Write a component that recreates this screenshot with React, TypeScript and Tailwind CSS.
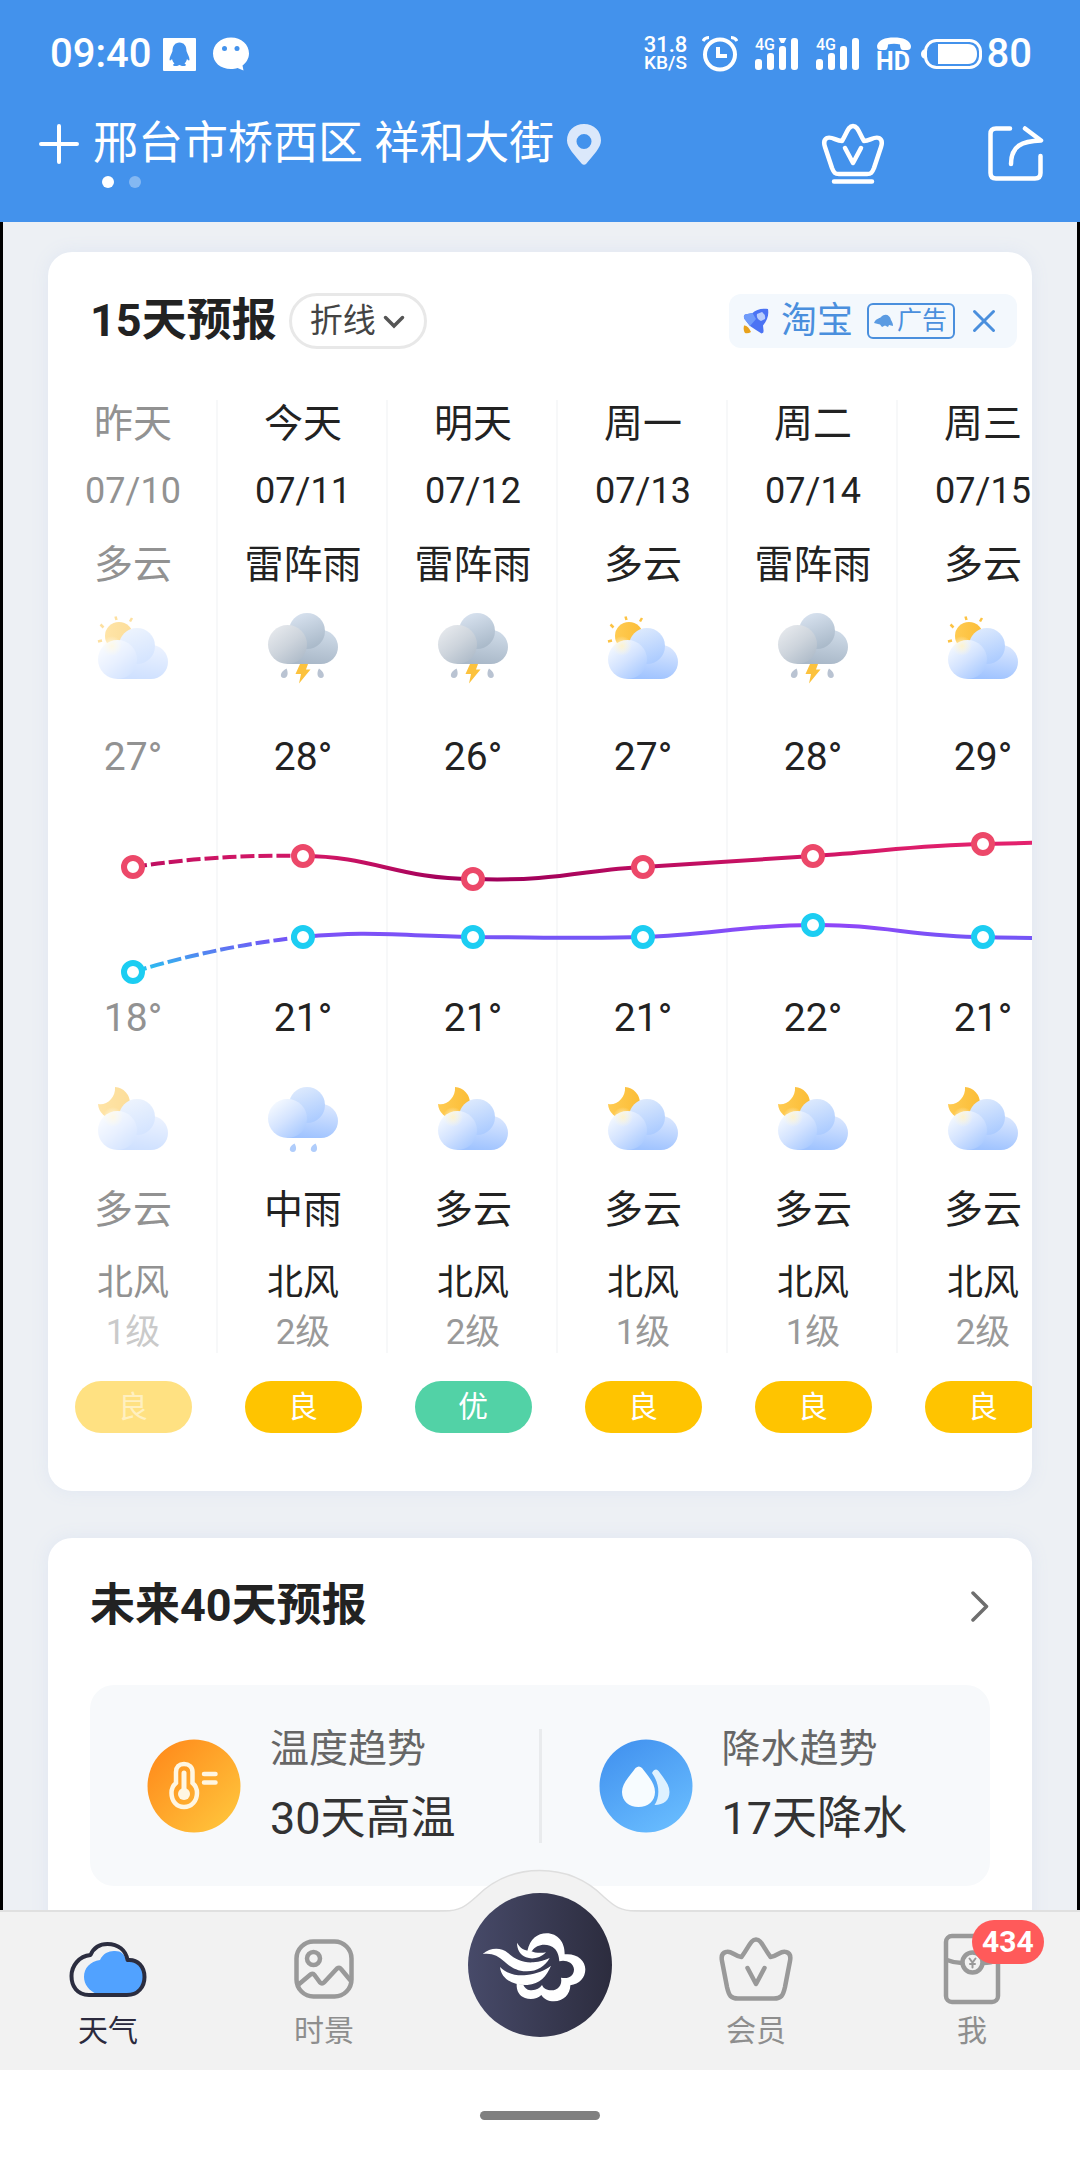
import type { ReactNode } from 'react';

type Sky = 'cloudDay' | 'cloudNight' | 'thunder' | 'rain';

type Day = {
  name: string;
  date: string;
  dayText: string;
  dayIcon: Sky;
  high: number;
  low: number;
  nightIcon: Sky;
  nightText: string;
  wind: string;
  level: string;
  air: string;
  past?: boolean;
};

const days: Day[] = [
  { name: '昨天', date: '07/10', dayText: '多云', dayIcon: 'cloudDay', high: 27, low: 18, nightIcon: 'cloudNight', nightText: '多云', wind: '北风', level: '1级', air: '良', past: true },
  { name: '今天', date: '07/11', dayText: '雷阵雨', dayIcon: 'thunder', high: 28, low: 21, nightIcon: 'rain', nightText: '中雨', wind: '北风', level: '2级', air: '良' },
  { name: '明天', date: '07/12', dayText: '雷阵雨', dayIcon: 'thunder', high: 26, low: 21, nightIcon: 'cloudNight', nightText: '多云', wind: '北风', level: '2级', air: '优' },
  { name: '周一', date: '07/13', dayText: '多云', dayIcon: 'cloudDay', high: 27, low: 21, nightIcon: 'cloudNight', nightText: '多云', wind: '北风', level: '1级', air: '良' },
  { name: '周二', date: '07/14', dayText: '雷阵雨', dayIcon: 'thunder', high: 28, low: 22, nightIcon: 'cloudNight', nightText: '多云', wind: '北风', level: '1级', air: '良' },
  { name: '周三', date: '07/15', dayText: '多云', dayIcon: 'cloudDay', high: 29, low: 21, nightIcon: 'cloudNight', nightText: '多云', wind: '北风', level: '2级', air: '良' },
];

// Shared gradients for the weather icons
function IconDefs() {
  return (
    <svg className="absolute" width="0" height="0" aria-hidden="true">
      <defs>
        <linearGradient id="blueLeft" x1="0.1" y1="0.1" x2="0.8" y2="1">
          <stop offset="0" stopColor="#f6faff" />
          <stop offset="0.5" stopColor="#d3e3ff" />
          <stop offset="1" stopColor="#a6c8ff" />
        </linearGradient>
        <linearGradient id="blueTop" x1="0.2" y1="0" x2="0.6" y2="1">
          <stop offset="0" stopColor="#dfebfd" />
          <stop offset="1" stopColor="#abcbff" />
        </linearGradient>
        <linearGradient id="blueRight" x1="0.6" y1="0" x2="0.4" y2="1">
          <stop offset="0" stopColor="#dae7ff" />
          <stop offset="1" stopColor="#9fc3ff" />
        </linearGradient>
        <linearGradient id="grayLeft" x1="0.1" y1="0.1" x2="0.8" y2="1">
          <stop offset="0" stopColor="#e6e9ed" />
          <stop offset="0.5" stopColor="#cdd4dc" />
          <stop offset="1" stopColor="#adbac8" />
        </linearGradient>
        <linearGradient id="grayTop" x1="0.2" y1="0" x2="0.6" y2="1">
          <stop offset="0" stopColor="#d9e3f0" />
          <stop offset="1" stopColor="#a9b9c9" />
        </linearGradient>
        <linearGradient id="grayRight" x1="0.6" y1="0" x2="0.4" y2="1">
          <stop offset="0" stopColor="#cfdbe8" />
          <stop offset="1" stopColor="#a9b8c8" />
        </linearGradient>
        <linearGradient id="sunFill" x1="0" y1="0" x2="1" y2="0">
          <stop offset="0" stopColor="#ffcb52" />
          <stop offset="1" stopColor="#fbbd36" />
        </linearGradient>
        <radialGradient id="sunGlow">
          <stop offset="0" stopColor="#fff3c9" stopOpacity="0.9" />
          <stop offset="1" stopColor="#fff8e0" stopOpacity="0" />
        </radialGradient>
      </defs>
    </svg>
  );
}

function Cloud({ gray, y }: { gray?: boolean; y: number }) {
  return (
    <g transform={`translate(0 ${y})`}>
      <path d="M20 52V30H54V18A17 17 0 0 1 54 52Z" fill={gray ? 'url(#grayRight)' : 'url(#blueRight)'} />
      <circle cx="40" cy="19" r="18" fill={gray ? 'url(#grayTop)' : 'url(#blueTop)'} />
      <circle cx="20.5" cy="32.5" r="19.5" fill={gray ? 'url(#grayLeft)' : 'url(#blueLeft)'} />
    </g>
  );
}

function WeatherIcon({ type, faded }: { type: Sky; faded?: boolean }) {
  return (
    <svg viewBox="0 0 72 72" className={`size-[72px] ${faded ? 'opacity-50' : ''}`} aria-hidden="true">
      {type === 'cloudDay' && (
        <>
          <circle cx="22" cy="24" r="14" fill="url(#sunFill)" />
          <path d="M18.5 4.500L19.500 8M35 6L33 9.500M3.500 12.500L6.500 15.500M1 29.500L5 28.500" stroke="#fcc344" strokeWidth="2.500" />
          <Cloud y={15} />
          <circle cx="15" cy="34" r="10" fill="url(#sunGlow)" />
        </>
      )}
      {type === 'cloudNight' && (
        <>
          <path d="M18 4A16 16 0 1 1 1 21C9 23 19 15 18 4Z" fill="url(#sunFill)" />
          <Cloud y={15} />
          <circle cx="16" cy="34" r="10" fill="url(#sunGlow)" />
        </>
      )}
      {type === 'thunder' && (
        <>
          <Cloud gray y={0} />
          <path d="M33 52H41L39 57.500H43.500L32 71.500L34 62H28.500Z" fill="#fcc23d" />
          <path d="M19.500 56.500C21.500 60.500 21 66 17 66C12.500 66 12.500 60 19.500 56.500ZM52 56.500C57.500 60 58.500 66 54 66C50 66 49.500 60.500 52 56.500Z" fill="#b9c3d2" />
        </>
      )}
      {type === 'rain' && (
        <>
          <Cloud y={3} />
          <path d="M27.500 60.500C30 64.500 29.500 69 26 69C21.500 69 21.500 63.500 27.500 60.500ZM48.500 60.500C51 64.500 50.500 69 47 69C42.500 69 42.500 63.500 48.500 60.500Z" fill="#b0cdfb" />
        </>
      )}
    </svg>
  );
}

// Both temperature curves, one column is 170 wide
function TempChart() {
  const highs = [87, 76, 99, 87, 76, 64];
  const lows = [192, 157, 157, 157, 145, 157];
  return (
    <svg viewBox="0 0 1020 213" className="absolute left-0 top-[380px] h-[213px] w-[1020px]" aria-hidden="true">
      <defs>
        <linearGradient id="highLine" gradientUnits="userSpaceOnUse" x1="0" y1="60" x2="0" y2="100">
          <stop offset="0" stopColor="#e8246f" />
          <stop offset="0.450" stopColor="#cc1464" />
          <stop offset="1" stopColor="#a0005a" />
        </linearGradient>
        <linearGradient id="lowLine" gradientUnits="userSpaceOnUse" x1="0" y1="143" x2="0" y2="192">
          <stop offset="0" stopColor="#9344f8" />
          <stop offset="0.350" stopColor="#7058f6" />
          <stop offset="0.650" stopColor="#4f8cf0" />
          <stop offset="1" stopColor="#1fcdf0" />
        </linearGradient>
      </defs>
      <g fill="none" strokeWidth="4">
        <path d="M85 87Q170 74 255 76" stroke="url(#highLine)" strokeDasharray="14 4" />
        <path d="M255 76C325 76 350 99 425 99C510 102 540 89 595 87L765 76C830 72 870 65 935 64L1020 62" stroke="url(#highLine)" />
        <path d="M85 192Q170 166 255 157" stroke="url(#lowLine)" strokeDasharray="14 4" />
        <path d="M255 157C320 151 340 155 425 157C480 157 540 159 595 157C660 155 700 145 765 145C830 144 870 157 935 157C960 158 990 158 1020 158" stroke="url(#lowLine)" />
      </g>
      {highs.map((y, i) => (
        <circle key={`h-${i}`} cx={85 + i * 170} cy={y} r="9" fill="#fff" stroke="#ec4869" strokeWidth="6" />
      ))}
      {lows.map((y, i) => (
        <circle key={`l-${i}`} cx={85 + i * 170} cy={y} r="9" fill="#fff" stroke="#1ccdf2" strokeWidth="6" />
      ))}
    </svg>
  );
}

function DayColumn({ day }: { day: Day }) {
  const tone = day.past ? 'text-[#929292]' : 'text-[#222222]';
  return (
    <li className="flex w-[170px] shrink-0 flex-col items-center">
      <div className={`flex w-full flex-col items-center border-r-2 border-[#f7f8f9] pl-[2px] text-[39px] leading-[48px] ${tone}`}>
        <p>{day.name}</p>
        <p className="mt-[19px] text-[36px]">{day.date}</p>
        <p className="mt-[26px] mb-[23px]">{day.dayText}</p>
        <WeatherIcon type={day.dayIcon} faded={day.past} />
        <p className="mt-[49px]">{day.high}°</p>
        <p className="mt-[213px] mb-[41px]">{day.low}°</p>
        <WeatherIcon type={day.nightIcon} faded={day.past} />
        <p className="mt-[31px]">{day.nightText}</p>
        <p className="mt-[25px] text-[36px]">{day.wind}</p>
        <p className={`mt-[6px] text-[35px] leading-10 ${day.past ? 'text-[#cacaca]' : 'text-[#999999]'}`}>{day.level}</p>
      </div>
      <span
        className={`mt-7 flex h-[52px] w-[117px] items-center justify-center rounded-full text-[30px] leading-[52px] ${
          day.past ? 'bg-[#ffe182] text-[#fff0c0]' : day.air === '优' ? 'bg-[#52d2a6] text-white' : 'bg-[#ffc400] text-white'
        }`}
      >
        {day.air}
      </span>
    </li>
  );
}

function Signal({ arrow }: { arrow?: boolean }) {
  return (
    <svg viewBox="0 0 44 34" className="h-[34px] w-11 overflow-visible" fill="#fff" aria-hidden="true">
      <text x="0" y="13" fontSize="16" fontWeight="500">4G</text>
      <rect x="0" y="22" width="7" height="11" rx="3" />
      <rect x="12" y="16" width="7" height="17" rx="3" />
      <rect x="24" y="9" width="7" height="24" rx="3" />
      <rect x="36" y="1" width="7" height="32" rx="3" />
      {arrow && <path d="M23.500 1H31.500L29 6H26Z" />}
    </svg>
  );
}

function StatusBar() {
  return (
    <div className="flex h-[108px] items-center pr-12 pl-[50px] text-[40px] leading-[48px] font-medium">
      <span>09:40</span>
      <svg viewBox="0 0 33 33" className="ml-3 size-[33px]" aria-hidden="true">
        <rect width="33" height="33" rx="1" fill="#fff" />
        <path d="M16.500 4.500C21 4.500 23.500 8 23.500 13C24.500 16 26.500 19 26.500 21.500C26.500 23 25 22.500 24 21C23.500 23 22.500 24.500 21.500 25.500C23.500 26.500 23.500 28 20.500 28C18.500 28 17.500 27.500 16.500 27C15.500 27.500 14.500 28 12.500 28C9.500 28 9.500 26.500 11.500 25.500C10.500 24.500 9.500 23 9 21C8 22.500 6.500 23 6.500 21.500C6.500 19 8.500 16 9.500 13C9.500 8 12 4.500 16.500 4.500Z" fill="#4392ec" />
      </svg>
      <svg viewBox="0 0 38 34" className="ml-4 h-[34px] w-[38px]" aria-hidden="true">
        <path d="M19 0.500C29.500 0.500 37 7.500 37 16.500C37 21.500 34 26 30.500 28.500L31.500 33.500L25.500 31C23.500 31.800 21.500 32 19 32C8.500 32 1 25.500 1 16.500C1 7.500 8.500 0.500 19 0.500Z" fill="#fff" />
        <circle cx="12.500" cy="11.500" r="2.500" fill="#4392ec" />
        <circle cx="25" cy="11.500" r="2.500" fill="#4392ec" />
      </svg>
      <div className="ml-auto flex items-center">
        <span className="flex w-11 flex-col items-center text-[19px] leading-[18px]">
          <span className="text-[22px]">31.8</span>
          <span>KB/S</span>
        </span>
        <svg viewBox="0 0 36 36" className="ml-[14px] size-9" fill="none" stroke="#fff" aria-hidden="true">
          <circle cx="18" cy="18.500" r="15" strokeWidth="4" />
          <path d="M16 11V20H25" strokeWidth="4" />
          <path d="M1 5C2 3 4 1.500 7 1.500M35 5C34 3 32 1.500 29 1.500" strokeWidth="3" />
        </svg>
        <span className="ml-[17px]"><Signal arrow /></span>
        <span className="ml-[17px]"><Signal /></span>
        <svg viewBox="0 0 36 36" className="ml-4 size-9 overflow-visible" fill="#fff" aria-hidden="true">
          <path d="M1 10C2 4 9 1.500 18 1.500S34 4 35 10C35 13 33.500 14 31.500 14H27C25 14 24 12 24 8.500C20.500 7.500 15.500 7.500 12 8.500C12 12 11 14 9 14H4.500C2.500 14 1 13 1 10Z" />
          <text x="0" y="34" fontSize="25" fontWeight="700">HD</text>
        </svg>
        <svg viewBox="0 0 62 32" className="ml-[9px] h-8 w-[62px]" aria-hidden="true">
          <rect x="4.500" y="2.500" width="55" height="27" rx="11" fill="none" stroke="#fff" strokeWidth="3" />
          <path d="M3.500 11C1 12 0 14 0 16S1 20 3.500 21Z" fill="#fff" />
          <path d="M17 6H47C53 6 56 10 56 16S53 26 47 26H17Z" fill="#fff" />
        </svg>
        <span className="ml-1">80</span>
      </div>
    </div>
  );
}

function Header() {
  return (
    <header className="shrink-0 bg-[#4392ec] pb-[34px] text-white">
      <StatusBar />
      <div className="flex h-[68px] items-center pt-[3px] pr-9 pl-[38px]">
        <button type="button" aria-label="添加城市">
          <svg viewBox="0 0 42 42" className="size-[42px]" stroke="#fff" strokeWidth="4" strokeLinecap="round" aria-hidden="true">
            <path d="M21 3V39M3 21H39" />
          </svg>
        </button>
        <button type="button" className="ml-[13px] flex items-center gap-3 text-[45px] leading-[68px]">
          邢台市桥西区 祥和大街
          <svg viewBox="0 0 36 42" className="h-[42px] w-9" aria-hidden="true">
            <path fillRule="evenodd" d="M18 1C28 1 35 8 35 17.500C35 25 27 32 20.500 40.500Q18 43 15.500 40.500C9 32 1 25 1 17.500C1 8 8 1 18 1ZM18 11A7.500 7.500 0 1 0 18 26A7.500 7.500 0 1 0 18 11Z" fill="#dbe8fb" />
          </svg>
        </button>
        <button type="button" className="mt-[18px] ml-auto" aria-label="会员中心">
          <svg viewBox="0 0 66 64" className="h-16 w-[66px]" fill="none" stroke="#fff" strokeWidth="4.500" strokeLinecap="round" strokeLinejoin="round" aria-hidden="true">
            <path d="M33 5C38 5 39 12 44 20C50 20 54 15 59 17C63 19 62 23 61 26L54 47C52 52 51 53 47 53H19C15 53 14 52 12 47L5 26C4 23 3 19 7 17C12 15 16 20 22 20C27 12 28 5 33 5Z" />
            <path d="M25 27L33 42L41 27M14 60.500H52" />
          </svg>
        </button>
        <button type="button" className="mt-[18px] ml-[100px]" aria-label="分享">
          <svg viewBox="0 0 58 58" className="size-[58px]" fill="none" stroke="#fff" strokeWidth="4.500" strokeLinecap="round" strokeLinejoin="round" aria-hidden="true">
            <path d="M24 4.500H10Q4.500 4.500 4.500 10V49Q4.500 54.500 10 54.500H49Q54.500 54.500 54.500 49V32" />
            <path d="M39 4.500L55 16.500C36 17 25 22 25 40" />
          </svg>
        </button>
      </div>
      <div className="flex gap-[15px] pl-[102px]">
        <span className="size-3 rounded-full bg-white" />
        <span className="size-3 rounded-full bg-white/35" />
      </div>
    </header>
  );
}

function ForecastCard() {
  return (
    <section className="overflow-hidden rounded-3xl bg-white pt-[41px] pb-[58px] shadow-[0_0_18px_#dfe6f2]">
      <div className="flex h-14 items-center pr-[15px] pl-[42px]">
        <h2 className="text-[45px] leading-[56px] font-bold text-[#222222]">15天预报</h2>
        <div className="relative ml-3">
          <select
            aria-label="图表样式"
            className="h-14 appearance-none rounded-full border-[3px] border-[#e8e8e8] bg-white pr-12 pl-[18px] text-[33px] leading-[48px] text-[#444444]"
          >
            <option>折线</option>
          </select>
          <svg viewBox="0 0 22 14" className="pointer-events-none absolute top-[22px] right-[22px] h-[14px] w-[22px]" fill="none" stroke="#555" strokeWidth="3.500" strokeLinecap="round" aria-hidden="true">
            <path d="M2.500 2.500L11 11L19.500 2.500" />
          </svg>
        </div>
        <div className="ml-auto flex h-[54px] items-center rounded-xl bg-[#f3f8fd] pr-[21px] pl-[14px] text-[#4a8fdd]">
          <a href="#taobao" className="flex items-center text-[36px] leading-[54px]">
            <svg viewBox="0 0 26 26" className="mr-3 size-[26px]" aria-hidden="true">
              <path d="M25 1C18 0 13 2 9.500 5L2 6.500Q0 8 1.500 11L7 18L13 22L18.500 25.500Q21 25.500 20.500 22L20 17.500C24.500 12 26 7 25 1Z" fill="#4b73f4" />
              <path d="M9.500 5L2 6.500Q0 8 1.500 11L7 18L13 11Z" fill="#6f9bfa" />
              <path d="M14 6L19 4Q23 7 22 11L18 13Q13 11 14 6Z" fill="#b9cdfc" />
              <path d="M1 17.500Q5 17 8 24Q5 26 2 25Q0 22 1 17.500Z" fill="#e8a21c" />
            </svg>
            淘宝
            <span className="ml-[14px] flex h-9 items-center rounded-md border-2 border-[#4a8fdd] pr-[6px] pl-[5px] text-[25px] leading-8">
              <svg viewBox="0 0 20 14" className="mr-[3px] h-[14px] w-5" aria-hidden="true">
                <path d="M0 9C2 4 5 5 7 3C11 -1 16 1 17 6C18 8 19 9 19 12L15 11L14 13L11 11.500L8 13L6 10.500Z" fill="#5b9be2" />
              </svg>
              广告
            </span>
          </a>
          <button type="button" className="ml-[17px]" aria-label="关闭广告">
            <svg viewBox="0 0 24 24" className="size-6" stroke="#4a8fdd" strokeWidth="3" strokeLinecap="round" aria-hidden="true">
              <path d="M2.500 2.500L21.500 21.500M21.500 2.500L2.500 21.500" />
            </svg>
          </button>
        </div>
      </div>
      <div className="relative mt-[51px]">
        <ul className="flex">
          {days.map((day) => (
            <DayColumn key={day.date} day={day} />
          ))}
        </ul>
        <TempChart />
      </div>
    </section>
  );
}

function Trend({ icon, label, value }: { icon: ReactNode; label: string; value: string }) {
  return (
    <div className="flex flex-1 items-center gap-[29px] pl-[57px]">
      {icon}
      <div className="flex flex-col gap-[18px]">
        <p className="text-[39px] leading-[48px] text-[#666666]">{label}</p>
        <p className="text-[45px] leading-[56px] text-[#333333]">{value}</p>
      </div>
    </div>
  );
}

function FortyDayCard() {
  return (
    <section className="mt-[47px] rounded-3xl bg-white px-[42px] pt-10 pb-16 shadow-[0_0_18px_#dfe6f2]">
      <a href="#forty" className="flex items-center justify-between">
        <h2 className="text-[45px] leading-[56px] font-bold text-[#222222]">未来40天预报</h2>
        <svg viewBox="0 0 20 32" className="h-8 w-5" fill="none" stroke="#6e6e6e" strokeWidth="3.500" strokeLinecap="round" strokeLinejoin="round" aria-hidden="true">
          <path d="M3 3L16.500 16.500L3 30" />
        </svg>
      </a>
      <div className="mt-[51px] flex h-[201px] items-center rounded-3xl bg-[#f7f9fb]">
        <Trend
          label="温度趋势"
          value="30天高温"
          icon={
            <svg viewBox="0 0 94 94" className="size-[94px]" aria-hidden="true">
              <defs>
                <linearGradient id="warm" x1="0.100" y1="0.100" x2="0.900" y2="0.900">
                  <stop offset="0" stopColor="#ff8c1c" />
                  <stop offset="1" stopColor="#ffc33b" />
                </linearGradient>
              </defs>
              <circle cx="47" cy="47" r="46.500" fill="url(#warm)" />
              <path d="M29 33C29 28 32 25 37 25S45.500 28 45.500 33V44C48.500 46.500 50 50 50 54C50 62 44.500 68 37 68S24.500 62 24.500 54C24.500 50 26 46.500 29 44Z" fill="none" stroke="#fff6e2" strokeWidth="4.500" />
              <path d="M37 34V54" stroke="#fff6e2" strokeWidth="5" strokeLinecap="round" />
              <circle cx="37" cy="55" r="6" fill="#fff6e2" />
              <path d="M57 35H68.500M57 43.500H68.500" stroke="#fff6e2" strokeWidth="4.500" strokeLinecap="round" />
            </svg>
          }
        />
        <span className="h-[114px] w-[3px] bg-[#e9ebed]" />
        <Trend
          label="降水趋势"
          value="17天降水"
          icon={
            <svg viewBox="0 0 94 94" className="size-[94px]" aria-hidden="true">
              <defs>
                <linearGradient id="wet" x1="0.200" y1="0" x2="0.800" y2="1">
                  <stop offset="0" stopColor="#4292ef" />
                  <stop offset="1" stopColor="#69bdff" />
                </linearGradient>
              </defs>
              <circle cx="47" cy="47" r="46.500" fill="url(#wet)" />
              <path d="M53 34C56 29 58.500 30 61 34C66 41 70.500 46 70.500 53C70.500 61 65 66 55.500 66C61 58 61 45 53 34Z" fill="#def1ff" />
              <path d="M36.500 29Q40 26 43 29C49 37 56 44 56 53C56 62 49 68 39.500 68S23 62 23 53C23 44 31 37 36.500 29Z" fill="#f7fcff" />
            </svg>
          }
        />
      </div>
    </section>
  );
}

function TabItem({ label, active, children }: { label: string; active?: boolean; children: ReactNode }) {
  return (
    <a href={`#${label}`} className={`flex flex-col items-center text-[30px] leading-10 ${active ? 'text-[#2b2a3e]' : 'text-[#8e8e8e]'}`}>
      <span className="relative mt-5 mb-[5px] flex h-[74px] items-center">{children}</span>
      {label}
    </a>
  );
}

function TabBar() {
  return (
    <nav className="relative grid h-[160px] shrink-0 grid-cols-5 border-t-2 border-[#e0e0e0] bg-[#f2f2f2]">
      {/* bump behind the round home button */}
      <svg viewBox="0 0 200 46" className="absolute -top-[43px] left-1/2 h-[46px] w-[200px] -translate-x-1/2" aria-hidden="true">
        <path d="M0 42H4C20 42 26 37 36 28C52 12 72 1.500 100 1.500S148 12 164 28C174 37 180 42 196 42H200V46H0Z" fill="#f2f2f2" />
        <path d="M0 42H4C20 42 26 37 36 28C52 12 72 1.500 100 1.500S148 12 164 28C174 37 180 42 196 42H200" fill="none" stroke="#dedede" strokeWidth="1.500" />
      </svg>
      <TabItem label="天气" active>
        <svg viewBox="0 0 78 58" className="h-[58px] w-[78px]" aria-hidden="true">
          <path d="M28 54C20 51 15 44 15 37C15 28 21 21.500 31 20C34 13 41 10.500 46 11C52 11 56 14 57 21C68 21 75 28 75 37C75 47 68 54 60 54Z" fill="#51a2ff" />
          <path d="M20 55C8 55 2.500 46 2.500 36C2.500 26 10 16 21.500 15C25 7 31 4 38.500 4C49 4 57 10 58.500 20C69 19 75.500 27 75.500 37C75.500 47 69 55 58 55Z" fill="none" stroke="#2b2d3f" strokeWidth="4" strokeLinejoin="round" />
        </svg>
      </TabItem>
      <TabItem label="时景">
        <svg viewBox="0 0 60 60" className="size-[60px]" fill="none" stroke="#999" strokeWidth="4.500" strokeLinejoin="round" aria-hidden="true">
          <rect x="2.500" y="2.500" width="55" height="55" rx="17" />
          <circle cx="19.500" cy="19.500" r="6.500" />
          <path d="M4 46L16.500 35.500Q19 34 20.500 36L26 43.500Q28 45.500 30 43.500L43 29.500Q45.500 28 47 30L57 42" />
        </svg>
      </TabItem>
      <button type="button" className="relative -mt-[19px] size-36 justify-self-center" aria-label="首页">
        <svg viewBox="84 98 432 432" className="size-36" aria-hidden="true">
          <defs>
            <linearGradient id="night" x1="0" y1="0" x2="1" y2="0">
              <stop offset="0" stopColor="#474a69" />
              <stop offset="1" stopColor="#2c2c3e" />
            </linearGradient>
          </defs>
          <circle cx="300" cy="314" r="216" fill="url(#night)" />
          <g fill="#fff">
            <path d="M262 272C270 236 292 219 320 219C353 219 375 246 374 282C410 278 436 300 436 327C436 353 418 371 391 375C391 402 370 423 342 423C325 423 312 416 304 404C292 417 270 418 255 413C238 406 229 392 230 370L250 373C255 385 264 390 275 390C290 389 299 384 306 374C311 385 320 390 335 390C352 390 368 375 363 352C385 357 402 348 402 327C400 305 375 298 358 303C357 285 352 274 345 266C325 247 290 250 276 272Z" />
            <path d="M231 247C242 266 256 272 272 271C284 278 302 279 318 276C300 295 275 298 258 291C240 283 231 268 231 247Z" />
            <path d="M128 281C150 262 182 260 204 278C228 299 250 308 280 306C300 304 315 300 329 293C315 318 290 334 258 333C230 332 210 320 192 303C175 286 155 277 128 281Z" />
            <path d="M180 320C200 340 230 348 260 344C290 340 315 330 333 316C320 348 300 370 262 374C222 376 184 358 180 320Z" />
          </g>
        </svg>
      </button>
      <TabItem label="会员">
        <svg viewBox="0 0 76 66" className="h-[66px] w-[76px]" fill="none" stroke="#999" strokeWidth="4.500" strokeLinecap="round" strokeLinejoin="round" aria-hidden="true">
          <path d="M38 3.500C43 3.500 44 9 52.500 21C60 20 63 14 68 16C72 17 73 20 72 25L67 51C65 60 63 62.500 56 62.500H20C13 62.500 11 60 9 51L4 25C3 20 4 17 8 16C13 14 16 20 23.500 21C32 9 33 3.500 38 3.500Z" />
          <path d="M29.500 32L38 48L46.500 32" />
        </svg>
      </TabItem>
      <TabItem label="我">
        <svg viewBox="0 0 60 74" className="h-[74px] w-[60px]" fill="none" stroke="#999" strokeWidth="4.500" strokeLinecap="round" aria-hidden="true">
          <rect x="4" y="4" width="52" height="66" rx="6" />
          <path d="M5 28Q12 31 20 31M41 31Q49 31 55 28" />
          <circle cx="30.500" cy="30.500" r="10" />
          <path d="M27.500 26.500L30.500 30.500L33.500 26.500M30.500 31V35.500M28 32H33" strokeWidth="2" />
        </svg>
        <span className="absolute -top-3 left-[30px] h-11 rounded-full bg-[#ff5a5a] px-[10px] text-[30px] leading-[44px] font-bold text-white">434</span>
      </TabItem>
    </nav>
  );
}

export default function App() {
  return (
    <div className="flex h-screen flex-col overflow-hidden bg-white font-['Roboto','Noto_Sans_CJK_SC',sans-serif]">
      <IconDefs />
      <Header />
      <main className="min-h-0 flex-1 overflow-hidden border-x-[3px] border-black bg-[#edf0f4] px-[45px] pt-[30px]">
        <ForecastCard />
        <FortyDayCard />
      </main>
      <TabBar />
      <div className="flex h-[90px] shrink-0 items-center justify-center bg-white">
        <span className="h-[9px] w-[120px] rounded-full bg-[#808080]" />
      </div>
    </div>
  );
}
